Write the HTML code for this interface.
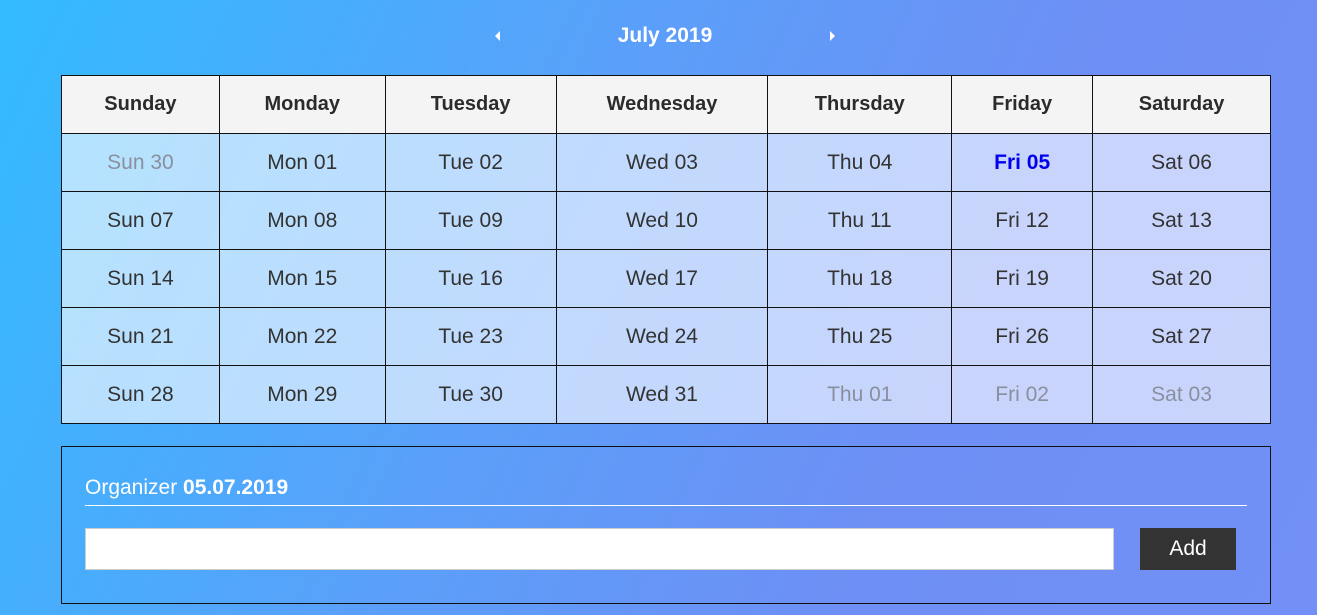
<!DOCTYPE html>
<html><head><meta charset="utf-8"><style>
*{box-sizing:border-box;margin:0;padding:0}
body{width:1317px;height:615px;overflow:hidden;font-family:"Liberation Sans",Roboto,sans-serif;background:linear-gradient(115deg,#33bbff 0%,#5aa0fa 40%,#6e8ff5 70%,#7290f5 100%);position:relative}
.title{position:absolute;top:24px;left:0;width:1317px;text-align:center;color:#fff;font-weight:bold;font-size:21px;padding-left:13px}
.arr{position:absolute;top:31px;width:0;height:0;border-top:5px solid transparent;border-bottom:5px solid transparent}
table{position:absolute;left:61px;top:75px;width:1210px;border-collapse:collapse}
td,th{border:1px solid #111;text-align:center;font-size:21px;height:58px;color:#333;font-weight:normal;background:rgba(255,255,255,0.62)}
th{background:#f4f4f4;font-weight:bold;color:#2b2b2b;font-size:20px}
.g{color:#8a8fa0}
.b{color:#0000ee;font-weight:bold}
.org{position:absolute;left:61px;top:446px;width:1210px;height:158px;border:1px solid #111}
.ot{position:absolute;left:23px;top:29px;color:#fff;font-size:21px}
.line{position:absolute;left:23px;top:58px;width:1162px;height:1px;background:#fff}
.inp{position:absolute;left:23px;top:81px;width:1029px;height:42px;background:#fff;border:1px solid #ccc}
.btn{position:absolute;left:1078px;top:81px;width:96px;height:42px;background:#333;color:#fff;font-size:21px;text-align:center;line-height:42px}
</style></head><body>
<div class="arr" style="left:495px;border-right:5px solid #fff"></div>
<div class="title">July 2019</div>
<div class="arr" style="left:830px;border-left:5px solid #fff"></div>
<table>
<colgroup><col style="width:158px"><col style="width:166px"><col style="width:171px"><col style="width:212px"><col style="width:184px"><col style="width:141px"><col style="width:178px"></colgroup>
<tr><th>Sunday</th><th>Monday</th><th>Tuesday</th><th>Wednesday</th><th>Thursday</th><th>Friday</th><th>Saturday</th></tr>
<tr><td class="g">Sun 30</td><td>Mon 01</td><td>Tue 02</td><td>Wed 03</td><td>Thu 04</td><td class="b">Fri 05</td><td>Sat 06</td></tr>
<tr><td>Sun 07</td><td>Mon 08</td><td>Tue 09</td><td>Wed 10</td><td>Thu 11</td><td>Fri 12</td><td>Sat 13</td></tr>
<tr><td>Sun 14</td><td>Mon 15</td><td>Tue 16</td><td>Wed 17</td><td>Thu 18</td><td>Fri 19</td><td>Sat 20</td></tr>
<tr><td>Sun 21</td><td>Mon 22</td><td>Tue 23</td><td>Wed 24</td><td>Thu 25</td><td>Fri 26</td><td>Sat 27</td></tr>
<tr><td>Sun 28</td><td>Mon 29</td><td>Tue 30</td><td>Wed 31</td><td class="g">Thu 01</td><td class="g">Fri 02</td><td class="g">Sat 03</td></tr>
</table>
<div class="org">
<div class="ot">Organizer <b>05.07.2019</b></div>
<div class="line"></div>
<div class="inp"></div>
<div class="btn">Add</div>
</div>
</body></html>
